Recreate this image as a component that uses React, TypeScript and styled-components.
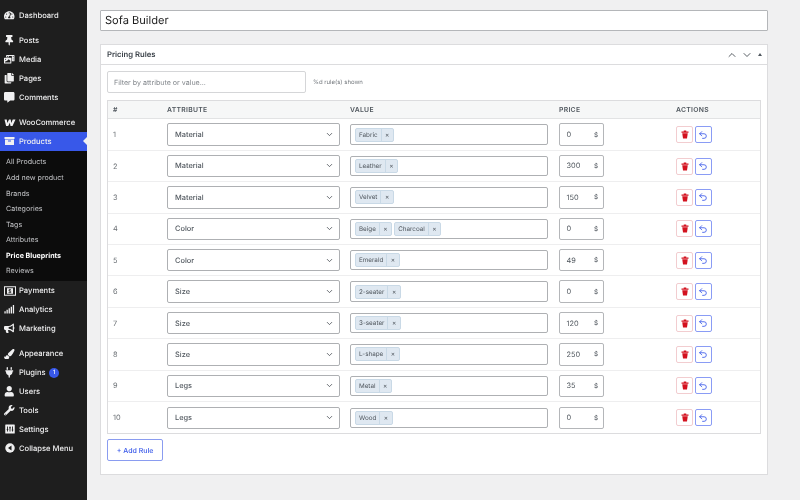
import React from "react";
import styled, { createGlobalStyle } from "styled-components";
import { ChevronDown, ChevronUp, Undo2 } from "lucide-react";
import {
  FaTachometerAlt,
  FaThumbtack,
  FaPhotoVideo,
  FaCopy,
  FaCommentAlt,
  FaSignal,
  FaBullhorn,
  FaPaintBrush,
  FaPlug,
  FaUser,
  FaWrench,
} from "react-icons/fa";

const Global = createGlobalStyle`
  html, body { margin: 0; padding: 0; width: 800px; height: 500px; overflow: hidden; background: #f0f0f1; }
  body, input { font-family: Inter, "Liberation Sans", sans-serif; text-rendering: geometricPrecision; }
  * { box-sizing: border-box; }
`;

const Page = styled.div`
  display: flex;
  width: 800px;
  height: 500px;
  filter: blur(0.3px);
  will-change: transform;
`;

const Sidebar = styled.nav`
  width: 87px;
  flex: none;
  height: 100%;
  background: #1e1e1e;
  padding-top: 6px;
  display: flex;
  flex-direction: column;
`;

const Group = styled.div`
  margin-bottom: 6.3px;
`;

const MenuItem = styled.div<{ $active?: boolean }>`
  position: relative;
  height: 18.9px;
  display: flex;
  align-items: center;
  color: #f0f0f1;
  background: ${(p) => (p.$active ? "#3858e9" : "transparent")};
  font-size: 7.6px;
  font-weight: 500;
  white-space: nowrap;
`;

const MenuIcon = styled.span`
  width: 19px;
  flex: none;
  display: flex;
  align-items: center;
  justify-content: center;
  color: #f0f0f1;
  font-size: 10.5px;
`;

const ActiveArrow = styled.span`
  position: absolute;
  right: 0;
  top: 50%;
  margin-top: -4px;
  border-style: solid;
  border-width: 4px 4px 4px 0;
  border-color: transparent #f0f0f1 transparent transparent;
`;

const Badge = styled.span`
  width: 10px;
  height: 10px;
  border-radius: 50%;
  margin-left: 3.5px;
  background: #3858e9;
  color: #fff;
  font-size: 6px;
  display: flex;
  align-items: center;
  justify-content: center;
`;

const SubMenu = styled.div`
  background: #0c0c0c;
  padding: 3.2px 0 2.6px;
`;

const SubItem = styled.div<{ $current?: boolean }>`
  height: 15.6px;
  padding-left: 6px;
  display: flex;
  align-items: center;
  font-size: 7.1px;
  font-weight: ${(p) => (p.$current ? 700 : 400)};
  color: ${(p) => (p.$current ? "#fff" : "#c3c4c7")};
  white-space: nowrap;
`;

const Main = styled.main`
  flex: 1;
  min-width: 0;
  padding: 9.5px 32px 0 13px;
  display: flex;
  flex-direction: column;
`;

const TitleInput = styled.input`
  height: 21.5px;
  width: 100%;
  border: 1px solid #b4b6b9;
  border-radius: 1px;
  background: #fff;
  padding: 0 4px;
  font-size: 11.1px;
  color: #1e1e1e;
  outline: none;
  margin-bottom: 13px;
`;

const Panel = styled.section`
  height: 431px;
  background: #fff;
  border: 1px solid #dcdcde;
`;

const PanelHeader = styled.header`
  height: 20px;
  display: flex;
  align-items: center;
  padding: 0 2px 0 6px;
  border-bottom: 1px solid #dcdcde;
  color: #1d2327;
`;

const PanelTitle = styled.h2`
  flex: 1;
  margin: 0;
  font-size: 7.7px;
  font-weight: 600;
  color: #3c434a;
`;

const HeaderControl = styled.span`
  width: 14.5px;
  display: flex;
  align-items: center;
  justify-content: center;
  color: #3c434a;
`;

const Triangle = styled.span`
  margin-left: 1px;
  width: 10px;
  display: flex;
  justify-content: center;
  &::before {
    content: "";
    border-style: solid;
    border-width: 0 2.5px 3.5px;
    border-color: transparent transparent #50575e;
  }
`;

const PanelBody = styled.div`
  padding: 6px 6px 0;
`;

const FilterRow = styled.div`
  display: flex;
  align-items: center;
  margin-bottom: 7px;
`;

const FilterInput = styled.input`
  width: 199px;
  height: 22px;
  border: 1px solid #d5d6d8;
  border-radius: 2px;
  padding: 0 6px;
  font-size: 7.1px;
  outline: none;
  &::placeholder {
    color: #80858a;
    opacity: 1;
  }
`;

const Count = styled.span`
  margin-left: 7px;
  font-size: 6px;
  color: #72777c;
`;

const Table = styled.div`
  border: 1px solid #dcdcde;
`;

const cols = "54px 183px 209px 117px 1fr";

const HeadRow = styled.div`
  display: grid;
  grid-template-columns: ${cols};
  height: 18.4px;
  align-items: center;
  padding-left: 5px;
  background: #f6f7f7;
  border-bottom: 1px solid #e2e3e4;
  font-size: 6.8px;
  font-weight: 600;
  letter-spacing: 0.3px;
  color: #50575e;
`;

const Row = styled.div`
  display: grid;
  grid-template-columns: ${cols};
  height: 31.42px;
  align-items: center;
  padding-left: 5px;
  border-bottom: 1px solid #eeeeef;
  font-size: 7.4px;
  color: #6b7075;
  &:last-child {
    border-bottom: none;
  }
`;

const Select = styled.div`
  width: 173px;
  height: 22.4px;
  border: 1px solid #aeb0b3;
  border-radius: 2px;
  padding: 0 5px 0 7px;
  display: flex;
  align-items: center;
  justify-content: space-between;
  font-size: 7.4px;
  font-weight: 500;
  color: #50575e;
  background: #fff;
`;

const ValueBox = styled.div`
  width: 198px;
  height: 20.5px;
  border: 1px solid #aeb0b3;
  border-radius: 2px;
  padding: 0 4px;
  display: flex;
  align-items: center;
  gap: 2px;
  background: #fff;
`;

const Tag = styled.span`
  height: 14px;
  display: inline-flex;
  align-items: center;
  padding: 0 0 0 3px;
  border: 1px solid #c9d9e6;
  border-radius: 2px;
  background: #dfe8f1;
  font-size: 6.3px;
  color: #50575e;
`;

const TagClose = styled.span`
  margin-left: 3px;
  height: 100%;
  padding: 0 3.5px;
  display: flex;
  align-items: center;
  border-left: 1px solid #c9d9e6;
  font-size: 6.5px;
  color: #50575e;
`;

const Price = styled.div`
  width: 45px;
  height: 22.4px;
  border: 1px solid #b4b6b9;
  border-radius: 2px;
  padding: 0 5px 0 6.5px;
  display: flex;
  align-items: center;
  justify-content: space-between;
  font-size: 7.4px;
  color: #50575e;
  background: #fff;
`;

const Currency = styled.span`
  font-size: 6.3px;
  color: #50575e;
`;

const Actions = styled.div`
  display: flex;
  gap: 1.6px;
`;

const ActionButton = styled.span<{ $tone: "danger" | "primary" }>`
  width: 17px;
  height: 17px;
  border: 1px solid ${(p) => (p.$tone === "danger" ? "#f2cdd0" : "#8a9cf5")};
  border-radius: 2px;
  display: flex;
  align-items: center;
  justify-content: center;
  color: ${(p) => (p.$tone === "danger" ? "#d3121f" : "#3858e9")};
  background: #fff;
`;

const AddButton = styled.span`
  margin-top: 5px;
  width: 56px;
  height: 22px;
  border: 1px solid #8a9cf0;
  border-radius: 2px;
  display: flex;
  align-items: center;
  justify-content: center;
  font-size: 7px;
  font-weight: 500;
  color: #3858e9;
  background: #fff;
`;

const Trash = () => (
  <svg width="8" height="9" viewBox="0 0 16 18" fill="currentColor">
    <path d="M1 3h14v2.500H1zM5.500 1h5v2h-5z" />
    <path d="M2.500 6.500h11L12 17H4z" />
  </svg>
);

const Woo = () => (
  <svg width="12" height="7" viewBox="0 0 24 14" fill="currentColor">
    <path d="M1 1h4.500l1.200 7L10 1h3.500l1 7 3-7H23l-6 13h-4l-1.300-6.500L8.500 14H4.200z" />
  </svg>
);

const Box = () => (
  <svg width="11" height="10" viewBox="0 0 22 20" fill="currentColor">
    <path d="M1 2h20v4H1z" />
    <path d="M2 7h18v11H2zM8 9v2h6V9z" fillRule="evenodd" />
  </svg>
);

const Money = () => (
  <svg width="12" height="10" viewBox="0 0 24 20">
    <rect x="1" y="1.500" width="22" height="17" fill="none" stroke="currentColor" strokeWidth="2" />
    <rect x="6" y="4.500" width="12" height="11" fill="currentColor" />
    <text x="12" y="14" textAnchor="middle" fontSize="10" fontWeight="700" fill="#1e1e1e">$</text>
  </svg>
);

const Sliders = () => (
  <svg width="10" height="10" viewBox="0 0 20 20">
    <rect x="0.500" y="1" width="19" height="18" rx="1" fill="currentColor" />
    <path d="M5 5v10M10 5v10M15 5v10" stroke="#1e1e1e" strokeWidth="1.800" />
    <path d="M3.500 11h3M8.500 7.500h3M13.500 12h3" stroke="#1e1e1e" strokeWidth="2" />
  </svg>
);

const Collapse = () => (
  <svg width="10" height="10" viewBox="0 0 20 20">
    <circle cx="10" cy="10" r="9.500" fill="currentColor" />
    <path d="M13 5v10l-7-5z" fill="#1e1e1e" />
  </svg>
);

const rules: { attr: string; values: string[]; price: string }[] = [
  { attr: "Material", values: ["Fabric"], price: "0" },
  { attr: "Material", values: ["Leather"], price: "300" },
  { attr: "Material", values: ["Velvet"], price: "150" },
  { attr: "Color", values: ["Beige", "Charcoal"], price: "0" },
  { attr: "Color", values: ["Emerald"], price: "49" },
  { attr: "Size", values: ["2-seater"], price: "0" },
  { attr: "Size", values: ["3-seater"], price: "120" },
  { attr: "Size", values: ["L-shape"], price: "250" },
  { attr: "Legs", values: ["Metal"], price: "35" },
  { attr: "Legs", values: ["Wood"], price: "0" },
];

const subItems = ["All Products", "Add new product", "Brands", "Categories", "Tags", "Attributes", "Price Blueprints", "Reviews"];

export default function App() {
  return (
    <Page>
      <Global />
      <Sidebar>
        <Group>
          <MenuItem><MenuIcon><FaTachometerAlt /></MenuIcon>Dashboard</MenuItem>
        </Group>
        <Group>
          <MenuItem><MenuIcon><FaThumbtack /></MenuIcon>Posts</MenuItem>
          <MenuItem><MenuIcon><FaPhotoVideo /></MenuIcon>Media</MenuItem>
          <MenuItem><MenuIcon><FaCopy /></MenuIcon>Pages</MenuItem>
          <MenuItem><MenuIcon><FaCommentAlt /></MenuIcon>Comments</MenuItem>
        </Group>
        <div>
          <MenuItem><MenuIcon><Woo /></MenuIcon>WooCommerce</MenuItem>
          <MenuItem $active><MenuIcon><Box /></MenuIcon>Products<ActiveArrow /></MenuItem>
          <SubMenu>
            {subItems.map((s) => (
              <SubItem key={s} $current={s === "Price Blueprints"}>{s}</SubItem>
            ))}
          </SubMenu>
        </div>
        <Group>
          <MenuItem><MenuIcon><Money /></MenuIcon>Payments</MenuItem>
          <MenuItem><MenuIcon><FaSignal /></MenuIcon>Analytics</MenuItem>
          <MenuItem><MenuIcon><FaBullhorn /></MenuIcon>Marketing</MenuItem>
        </Group>
        <div>
          <MenuItem><MenuIcon><FaPaintBrush /></MenuIcon>Appearance</MenuItem>
          <MenuItem><MenuIcon><FaPlug /></MenuIcon>Plugins<Badge>1</Badge></MenuItem>
          <MenuItem><MenuIcon><FaUser /></MenuIcon>Users</MenuItem>
          <MenuItem><MenuIcon><FaWrench /></MenuIcon>Tools</MenuItem>
          <MenuItem><MenuIcon><Sliders /></MenuIcon>Settings</MenuItem>
          <MenuItem><MenuIcon><Collapse /></MenuIcon>Collapse Menu</MenuItem>
        </div>
      </Sidebar>
      <Main>
        <TitleInput defaultValue="Sofa Builder" />
        <Panel>
          <PanelHeader>
            <PanelTitle>Pricing Rules</PanelTitle>
            <HeaderControl><ChevronUp size={12} strokeWidth={1.7} /></HeaderControl>
            <HeaderControl><ChevronDown size={12} strokeWidth={1.7} /></HeaderControl>
            <Triangle />
          </PanelHeader>
          <PanelBody>
            <FilterRow>
              <FilterInput placeholder="Filter by attribute or value..." />
              <Count>%d rule(s) shown</Count>
            </FilterRow>
            <Table>
              <HeadRow>
                <span>#</span>
                <span>ATTRIBUTE</span>
                <span>VALUE</span>
                <span>PRICE</span>
                <span>ACTIONS</span>
              </HeadRow>
              {rules.map((r, i) => (
                <Row key={i}>
                  <span>{i + 1}</span>
                  <Select>
                    {r.attr}
                    <ChevronDown size={9} strokeWidth={2} color="#3c434a" />
                  </Select>
                  <ValueBox>
                    {r.values.map((v) => (
                      <Tag key={v}>{v}<TagClose>×</TagClose></Tag>
                    ))}
                  </ValueBox>
                  <Price>
                    {r.price}
                    <Currency>$</Currency>
                  </Price>
                  <Actions>
                    <ActionButton $tone="danger"><Trash /></ActionButton>
                    <ActionButton $tone="primary"><Undo2 size={10} strokeWidth={2} /></ActionButton>
                  </Actions>
                </Row>
              ))}
            </Table>
            <AddButton>+ Add Rule</AddButton>
          </PanelBody>
        </Panel>
      </Main>
    </Page>
  );
}
